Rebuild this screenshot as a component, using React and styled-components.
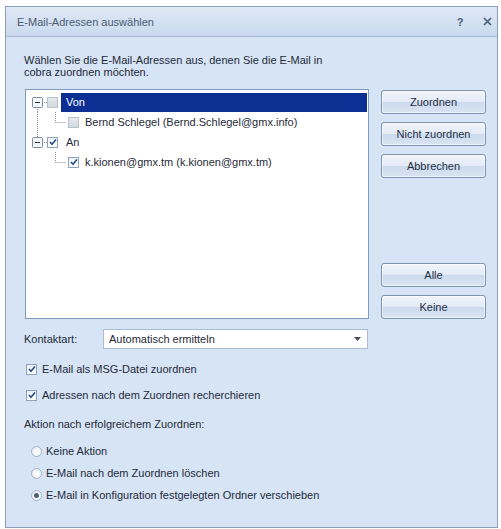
import React from 'react'
import styled, { createGlobalStyle } from 'styled-components'

const GlobalStyle = createGlobalStyle`
  body {
    margin: 0;
    background: #ffffff;
    font-family: 'Liberation Sans', 'DejaVu Sans', sans-serif;
    font-size: 11px;
    color: #1f2a38;
  }
`

const Dialog = styled.div`
  margin: 6px 0 0 5px;
  width: 493px;
  height: 522px;
  box-sizing: border-box;
  border: 1px solid #8b9fbb;
  background: #d6e4f6;
  display: flex;
  flex-direction: column;
`

const TitleBar = styled.div`
  height: 30px;
  box-sizing: border-box;
  border-bottom: 1px solid #a6bad5;
  background: linear-gradient(#dfe9f6, #c9d9ee);
  display: flex;
  align-items: center;
  padding: 0 1px 0 11px;
`

const Title = styled.div`
  flex: 1;
  font-size: 11px;
  color: #4a5b72;
`

const TitleIcon = styled.span`
  width: 18px;
  text-align: center;
  color: #4b5e78;
  font-weight: bold;
  font-size: 11px;
  margin-left: 9px;
  display: flex;
  justify-content: center;
`

const Body = styled.div`
  padding: 17px 11px 0 18px;
  display: flex;
  flex-direction: column;
`

const Intro = styled.p`
  margin: 0;
  line-height: 12px;
  width: 320px;
`

const Main = styled.div`
  display: flex;
  gap: 12px;
  margin-top: 11px;
  height: 230px;
  padding-left: 1px;
`

const Tree = styled.div`
  width: 344px;
  box-sizing: border-box;
  border: 1px solid #7f9bbd;
  background: #ffffff;
  padding: 2px 1px;
`

const TreeRow = styled.div`
  display: flex;
  align-items: center;
  height: 20px;
`

const Gutter = styled.svg`
  flex: none;
  display: block;
`

const Box = styled.span`
  flex: none;
  width: 11px;
  height: 11px;
  box-sizing: border-box;
  border: 1px solid ${({ $muted }) => ($muted ? '#b8c2cf' : '#8ea2bd')};
  background: ${({ $muted }) => ($muted ? 'linear-gradient(#e6e9ee, #d3d8df)' : 'linear-gradient(#eef2f8, #ffffff)')};
  display: flex;
  align-items: center;
  justify-content: center;
  margin-right: ${({ $gap }) => $gap}px;
`

const NodeLabel = styled.div`
  flex: 1;
  height: 19px;
  display: flex;
  align-items: center;
  padding-left: 5px;
  background: ${({ $selected }) => ($selected ? '#0c2f93' : 'transparent')};
  color: ${({ $selected }) => ($selected ? '#ffffff' : '#1f2a38')};
`

const Side = styled.div`
  width: 105px;
  display: flex;
  flex-direction: column;
  gap: 8px;
  padding-top: 1px;
`

const Spacer = styled.div`
  flex: 1;
`

const Button = styled.button`
  height: 24px;
  box-sizing: border-box;
  border: 1px solid #7d93b2;
  border-radius: 3px;
  background: linear-gradient(#f1f5fb 0%, #e2eaf5 50%, #ccdaee 51%, #d9e4f3 100%);
  box-shadow: inset 0 0 0 1px rgba(255, 255, 255, 0.6);
  font-family: inherit;
  font-size: 11px;
  color: #1e2f45;
  padding: 0;
`

const FieldRow = styled.div`
  display: flex;
  align-items: center;
  height: 20px;
  margin-top: 10px;
`

const FieldLabel = styled.span`
  width: 79px;
`

const Select = styled.div`
  width: 265px;
  height: 20px;
  box-sizing: border-box;
  border: 1px solid #abbdd4;
  background: #ffffff;
  display: flex;
  align-items: center;
  padding: 0 6px 0 5px;
`

const SelectText = styled.span`
  flex: 1;
`

const CheckRow = styled.label`
  display: flex;
  align-items: center;
  height: 20px;
  margin-top: ${({ $top }) => $top}px;
  padding-left: 2px;
  gap: 5px;
`

const CheckBox = styled.span`
  width: 11px;
  height: 11px;
  box-sizing: border-box;
  border: 1px solid #8ea2bd;
  background: linear-gradient(#e9eef5, #ffffff);
  display: flex;
  align-items: center;
  justify-content: center;
`

const SectionLabel = styled.div`
  height: 20px;
  display: flex;
  align-items: center;
  margin-top: 9px;
`

const RadioGroup = styled.div`
  display: flex;
  flex-direction: column;
  gap: 2px;
  margin-top: 7px;
  padding-left: 7px;
`

const RadioRow = styled.label`
  display: flex;
  align-items: center;
  height: 20px;
  gap: 4px;
`

const Radio = styled.span`
  width: 11px;
  height: 11px;
  box-sizing: border-box;
  border-radius: 50%;
  border: 1px solid #a3b3c8;
  background: radial-gradient(circle at 60% 60%, #ffffff, #e3e9f1);
  display: flex;
  align-items: center;
  justify-content: center;

  &::after {
    content: '';
    width: 5px;
    height: 5px;
    border-radius: 50%;
    background: ${({ $checked }) => ($checked ? '#4d5f76' : 'transparent')};
  }
`

const Tick = () => (
  <svg width="8" height="8" viewBox="0 0 8 8">
    <path d="M1 4 L3 6.3 L7 1.5" fill="none" stroke="#2b4d86" strokeWidth="1.6" />
  </svg>
)

const Arrow = () => (
  <svg width="7" height="4" viewBox="0 0 7 4">
    <path d="M0 0 H7 L3.5 4 Z" fill="#4a4f57" />
  </svg>
)

const dots = { stroke: '#8a8f99', strokeWidth: 1, strokeDasharray: '1 1', fill: 'none' }

// expander box with tree lines, width 20 (tree x 26..46)
const ParentGutter = ({ down, up }) => (
  <Gutter width="20" height="20" viewBox="0 0 20 20">
    {up && <line x1="10.5" y1="0" x2="10.5" y2="5" {...dots} />}
    {down && <line x1="10.5" y1="15" x2="10.5" y2="20" {...dots} />}
    <line x1="15" y1="10.5" x2="20" y2="10.5" {...dots} />
    <rect x="5.5" y="5.5" width="10" height="10" rx="1" fill="#f4f6f9" stroke="#7c8aa0" />
    <line x1="8" y1="10.5" x2="13" y2="10.5" stroke="#2b3440" />
  </Gutter>
)

const ChildGutter = ({ through }) => (
  <Gutter width="41" height="20" viewBox="0 0 41 20">
    {through && <line x1="10.5" y1="0" x2="10.5" y2="20" {...dots} />}
    <line x1="28.5" y1="0" x2="28.5" y2="10.5" {...dots} />
    <line x1="28.5" y1="10.5" x2="39" y2="10.5" {...dots} />
  </Gutter>
)

const tree = [
  { kind: 'parent', label: 'Von', selected: true, muted: true, down: true },
  { kind: 'child', label: 'Bernd Schlegel (Bernd.Schlegel@gmx.info)', muted: true, through: true },
  { kind: 'parent', label: 'An', checked: true, up: true },
  { kind: 'child', label: 'k.kionen@gmx.tm (k.kionen@gmx.tm)', checked: true },
]

const radios = [
  { label: 'Keine Aktion' },
  { label: 'E-Mail nach dem Zuordnen löschen' },
  { label: 'E-Mail in Konfiguration festgelegten Ordner verschieben', checked: true },
]

const App = () => {
  return (
    <>
      <GlobalStyle />
      <Dialog>
        <TitleBar>
          <Title>E-Mail-Adressen auswählen</Title>
          <TitleIcon>?</TitleIcon>
          <TitleIcon>
            <svg width="9" height="9" viewBox="0 0 9 9">
              <path d="M1 1 L8 8 M8 1 L1 8" stroke="#4b5e78" strokeWidth="1.7" />
            </svg>
          </TitleIcon>
        </TitleBar>
        <Body>
          <Intro>Wählen Sie die E-Mail-Adressen aus, denen Sie die E-Mail in cobra zuordnen möchten.</Intro>
          <Main>
            <Tree>
              {tree.map((item) => (
                <TreeRow key={item.label}>
                  {item.kind === 'parent'
                    ? <ParentGutter down={item.down} up={item.up} />
                    : <ChildGutter through={item.through} />}
                  <Box $muted={item.muted} $gap={item.kind === 'parent' ? 3 : 1}>
                    {item.checked && <Tick />}
                  </Box>
                  <NodeLabel $selected={item.selected}>{item.label}</NodeLabel>
                </TreeRow>
              ))}
            </Tree>
            <Side>
              <Button>Zuordnen</Button>
              <Button>Nicht zuordnen</Button>
              <Button>Abbrechen</Button>
              <Spacer />
              <Button>Alle</Button>
              <Button>Keine</Button>
            </Side>
          </Main>
          <FieldRow>
            <FieldLabel>Kontaktart:</FieldLabel>
            <Select>
              <SelectText>Automatisch ermitteln</SelectText>
              <Arrow />
            </Select>
          </FieldRow>
          <CheckRow $top={10}>
            <CheckBox><Tick /></CheckBox>
            E-Mail als MSG-Datei zuordnen
          </CheckRow>
          <CheckRow $top={6}>
            <CheckBox><Tick /></CheckBox>
            Adressen nach dem Zuordnen recherchieren
          </CheckRow>
          <SectionLabel>Aktion nach erfolgreichem Zuordnen:</SectionLabel>
          <RadioGroup>
            {radios.map((r) => (
              <RadioRow key={r.label}>
                <Radio $checked={r.checked} />
                {r.label}
              </RadioRow>
            ))}
          </RadioGroup>
        </Body>
      </Dialog>
    </>
  )
}

export default App
